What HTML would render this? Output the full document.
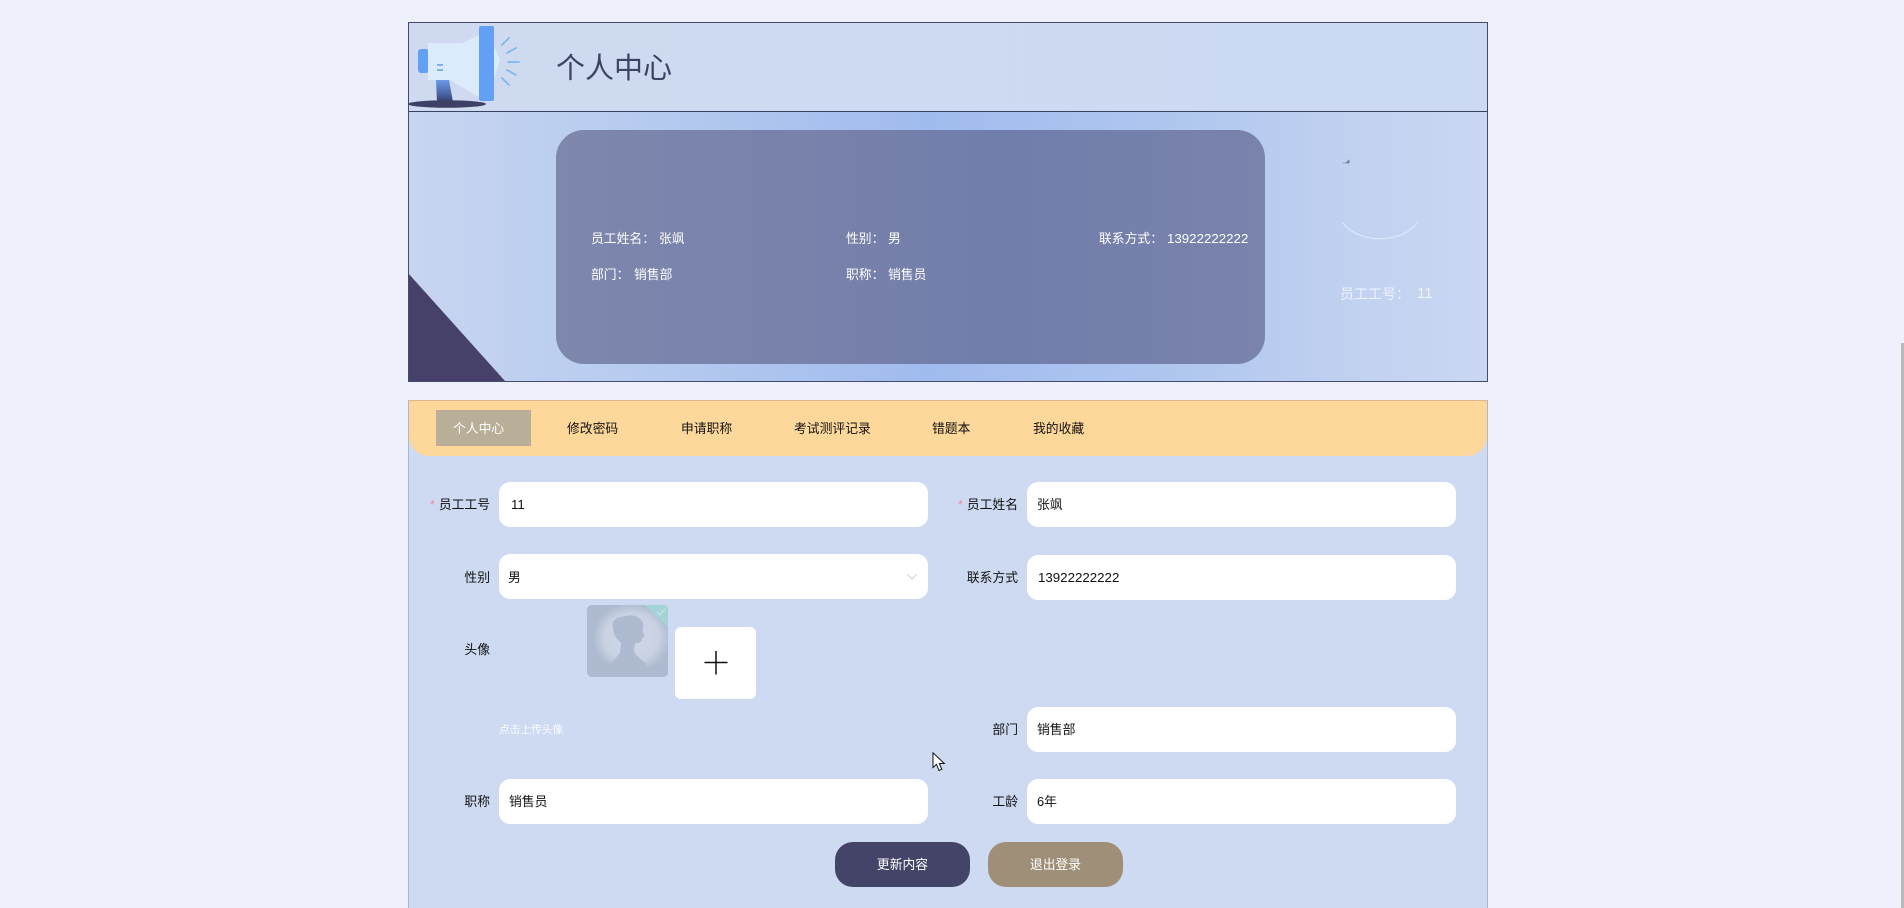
<!DOCTYPE html>
<html lang="zh">
<head>
<meta charset="utf-8">
<title>个人中心</title>
<style>
html,body{margin:0;padding:0;width:1904px;height:908px;overflow:hidden;background:#eef1fb;}
body{position:relative;font-family:"Liberation Sans","Noto Sans CJK SC",sans-serif;font-size:12.8px;color:#111;}
div,span{box-sizing:border-box;}
.a{position:absolute;}
.t{position:absolute;line-height:20px;height:20px;white-space:nowrap;margin-top:1px;}
.w{color:#fff;}
.l{text-align:right;width:80px;}
.n{font-size:13.3px;}
.i{position:absolute;background:#fff;border-radius:11px;height:45px;}
.btn{position:absolute;top:842px;width:135px;height:45px;border-radius:18px;color:#fff;text-align:center;line-height:45px;}
</style>
</head>
<body>
<!-- header -->
<div class="a" style="left:408px;top:22px;width:1080px;height:91px;background:linear-gradient(90deg,#cfdaf0,#cbd9f2);border:1px solid #454a70;border-bottom:2px solid #3a4263;"></div>
<svg class="a" style="left:0;top:0" width="800" height="120" viewBox="0 0 800 120">
<defs><linearGradient id="st" x1="0" y1="0" x2="0" y2="1"><stop offset="0" stop-color="#6a9be6"/><stop offset=".55" stop-color="#4f6cae"/><stop offset="1" stop-color="#33406f"/></linearGradient></defs>
<rect x="418" y="49" width="11" height="24" rx="3" fill="#62a0f6"/>
<path d="M428 43H463L479 35V97L450 80H428Z" fill="#dcebfc"/>
<path d="M436 80H449L453 102H437Z" fill="url(#st)"/>
<rect x="479" y="26" width="15" height="75" rx="2" fill="#62a0f6"/>
<path d="M494 47L500 60L494 78Z" fill="#dcebfc"/>
<path d="M437 65H443M437 70H443" stroke="#62a0f6" stroke-width="1.500"/>
<path d="M502 45L509 38M507 53L516 48M508 62H519M507 70L516 75M502 78L509 85" stroke="#7fb8ec" stroke-width="1.800" stroke-linecap="round"/>
<ellipse cx="447" cy="104" rx="39" ry="3.800" fill="#3c4065"/>
<text x="556" y="78" font-family="'Liberation Sans','Noto Sans CJK SC',sans-serif" font-size="29" fill="#3e4263">个人中心</text>
</svg>

<!-- banner -->
<div class="a" style="left:408px;top:112px;width:1080px;height:270px;border:1px solid #454a70;border-top:none;background:linear-gradient(90deg,#c8d5f1 0%,#b9cdef 18%,#a0bbee 48%,#b0c7ef 72%,#bfd0f0 85%,#cad7f2 100%);overflow:hidden;">
  <div class="a" style="left:-1px;top:161px;width:97px;height:108px;background:#454169;clip-path:polygon(0 0,100% 100%,0 100%);"></div>
</div>
<div class="a" style="left:556px;top:130px;width:709px;height:234px;border-radius:28px;background:linear-gradient(90deg,#7e87ac,#7680ab 45%,#707dab 62%,#7a83ac);"></div>
<span class="t w" style="left:591px;top:228px;">员工姓名：</span><span class="t w" style="left:659px;top:228px;">张飒</span>
<span class="t w" style="left:846px;top:228px;">性别：</span><span class="t w" style="left:888px;top:228px;">男</span>
<span class="t w" style="left:1099px;top:228px;">联系方式：</span><span class="t w n" style="left:1167px;top:228px;">13922222222</span>
<span class="t w" style="left:591px;top:264px;">部门：</span><span class="t w" style="left:634px;top:264px;">销售部</span>
<span class="t w" style="left:846px;top:264px;">职称：</span><span class="t w" style="left:888px;top:264px;">销售员</span>
<svg class="a" style="left:1330px;top:150px" width="100" height="100" viewBox="0 0 100 100">
<path d="M13 73C28 94 72 94 87 73" fill="none" stroke="#e3ebf9" stroke-width="1"/>
<path d="M13 13H19V10L16 13" fill="#67788f" stroke="#67788f" stroke-width=".6"/>
</svg>
<span class="t" style="left:1340px;top:283px;font-size:14px;color:#eef3fc;">员工工号：</span>
<span class="t" style="left:1417px;top:283px;font-size:15px;color:#eef3fc;">11</span>

<!-- card -->
<div class="a" style="left:408px;top:400px;width:1080px;height:520px;background:#cddaf1;border:1px solid #aeb6c4;border-top-color:#e0b48e;overflow:hidden;">
  <div class="a" style="left:0;top:0;width:1078px;height:55px;background:#fed89b;border-radius:0 0 20px 20px;"></div>
</div>
<div class="a" style="left:436px;top:410px;width:95px;height:36px;background:#b9ae98;"></div>
<span class="t w" style="left:453px;top:418px;">个人中心</span>
<span class="t" style="left:567px;top:418px;">修改密码</span>
<span class="t" style="left:681px;top:418px;">申请职称</span>
<span class="t" style="left:794px;top:418px;">考试测评记录</span>
<span class="t" style="left:932px;top:418px;">错题本</span>
<span class="t" style="left:1033px;top:418px;">我的收藏</span>

<!-- row 1 -->
<span class="t" style="left:430px;top:494px;color:#ee8e8e;">*</span>
<span class="t l" style="left:410px;top:494px;">员工工号</span>
<div class="i" style="left:499px;top:482px;width:429px;"></div>
<span class="t n" style="left:511px;top:494px;">11</span>
<span class="t" style="left:958px;top:494px;color:#ee8e8e;">*</span>
<span class="t l" style="left:938px;top:494px;">员工姓名</span>
<div class="i" style="left:1027px;top:482px;width:429px;"></div>
<span class="t" style="left:1037px;top:494px;">张飒</span>

<!-- row 2 -->
<span class="t l" style="left:410px;top:567px;">性别</span>
<div class="i" style="left:499px;top:554px;width:429px;"></div>
<span class="t" style="left:508px;top:567px;">男</span>
<svg class="a" style="left:906px;top:573px" width="12" height="8" viewBox="0 0 12 8"><path d="M1.500 1.500L6 6L10.500 1.500" fill="none" stroke="#c6ccd6" stroke-width="1"/></svg>
<span class="t l" style="left:938px;top:567px;">联系方式</span>
<div class="i" style="left:1027px;top:555px;width:429px;"></div>
<span class="t n" style="left:1038px;top:567px;">13922222222</span>

<!-- avatar -->
<span class="t l" style="left:410px;top:639px;">头像</span>
<svg class="a" style="left:587px;top:605px" width="81" height="72" viewBox="0 0 81 72">
<defs>
<radialGradient id="av" cx="55%" cy="45%" r="48%"><stop offset="0" stop-color="#d0d8e8"/><stop offset=".7" stop-color="#c9d2e3"/><stop offset="1" stop-color="#aebacf"/></radialGradient>
<clipPath id="ac"><rect width="81" height="72" rx="5"/></clipPath>
</defs>
<g clip-path="url(#ac)">
<rect width="81" height="72" fill="#aebacf"/>
<rect width="81" height="72" fill="url(#av)"/>
<path d="M26 22C24 14 32 12 38 11C46 9 54 12 56 18C57 22 55 25 56 28L58 31L55 33C55 37 52 39 48 38L47 44C47 50 53 53 58 58L66 72H15C20 62 28 54 33 48L34 38C30 34 26 30 26 22Z" fill="#aebacf"/>
<path d="M58 0H81V22Z" fill="#a3d4d6"/>
<path d="M70 7L73 10L78 4" fill="none" stroke="#c8e6e6" stroke-width="1.200"/>
</g>
</svg>
<div class="a" style="left:675px;top:627px;width:81px;height:72px;background:#fff;border-radius:6px;"></div>
<svg class="a" style="left:703px;top:650px" width="26" height="26" viewBox="0 0 26 26"><path d="M1.500 12.500H24.500M13 1V24.500" stroke="#111" stroke-width="1.500"/></svg>
<span class="t w" style="left:499px;top:719px;font-size:10.700px;opacity:.9;">点击上传头像</span>

<!-- row 3 -->
<span class="t l" style="left:938px;top:719px;">部门</span>
<div class="i" style="left:1027px;top:707px;width:429px;"></div>
<span class="t" style="left:1037px;top:719px;">销售部</span>

<!-- row 4 -->
<span class="t l" style="left:410px;top:791px;">职称</span>
<div class="i" style="left:499px;top:779px;width:429px;"></div>
<span class="t" style="left:509px;top:791px;">销售员</span>
<span class="t l" style="left:938px;top:791px;">工龄</span>
<div class="i" style="left:1027px;top:779px;width:429px;"></div>
<span class="t" style="left:1037px;top:791px;">6年</span>

<!-- buttons -->
<div class="btn" style="left:835px;background:#444469;">更新内容</div>
<div class="btn" style="left:988px;background:#9f8f78;">退出登录</div>

<!-- cursor -->
<svg class="a" style="left:932px;top:752px" width="14" height="21" viewBox="0 0 14 21"><path d="M1 .8V15.500L4.500 12.300L7 18.500L9.800 17.300L7.300 11.500H12.300Z" fill="#fff" stroke="#111" stroke-width="1"/></svg>

<!-- scrollbar -->
<div class="a" style="left:1901px;top:343px;width:3px;height:565px;background:#b8b8bc;"></div>
</body>
</html>
